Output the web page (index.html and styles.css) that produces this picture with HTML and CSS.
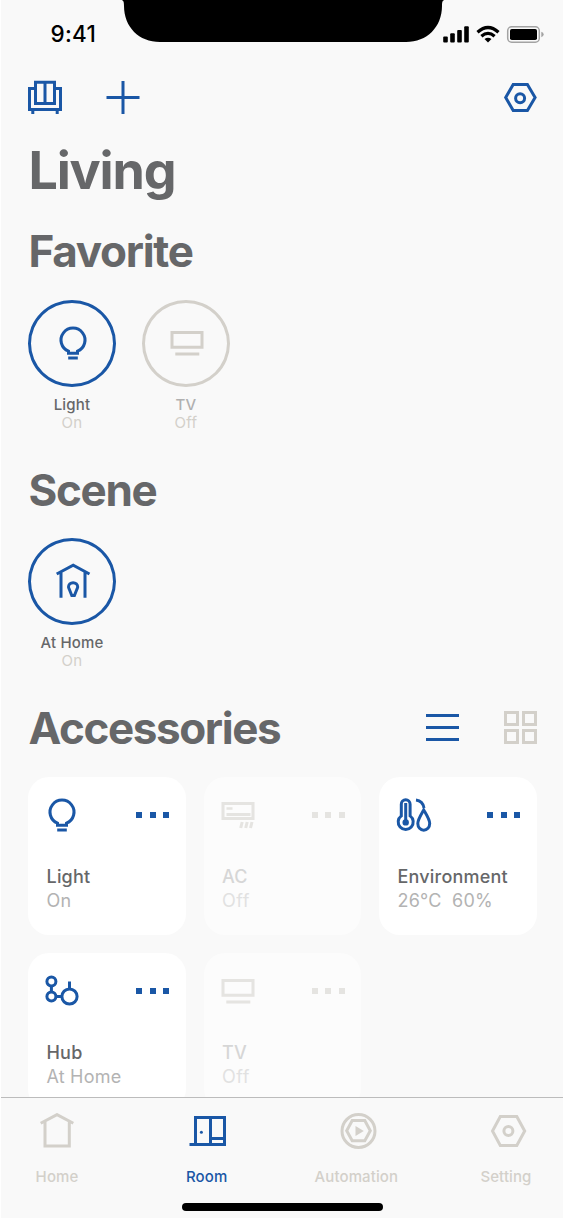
FILE: index.html
```html
<!DOCTYPE html>
<html lang="en">
<head>
<meta charset="utf-8">
<title>Living</title>
<link rel="stylesheet" href="styles.css">
</head>
<body>
<svg class="defs" aria-hidden="true">
  <symbol id="bulb" viewBox="0 0 34 34">
    <path d="M12.5 25.2A12 12 0 1 1 21.5 25.2V27.3H12.5Z"/>
    <path d="M12.2 32H21.8"/>
  </symbol>
  <symbol id="tv" viewBox="0 0 34 34">
    <path d="M2 6.5H32V21.3H2ZM5.3 28H29.3"/>
  </symbol>
</svg>
<div class="phone">
  <header class="status">
    <span class="time">9:41</span>
    <svg class="notch" viewBox="0 0 324 42"><path d="M0 0C2.5 0 3 2 3 6C3 27 18 42 39 42H285C306 42 321 27 321 6C321 2 321.500 0 324 0Z"/></svg>
    <svg class="indicators" viewBox="443 25 101 19">
      <rect x="443.200" y="36.500" width="4.600" height="6" rx="1"/>
      <rect x="450.200" y="33.300" width="4.600" height="9.200" rx="1"/>
      <rect x="457.200" y="30" width="4.600" height="12.500" rx="1"/>
      <rect x="464.200" y="26.300" width="4.600" height="16.200" rx="1"/>
      <g class="wifi">
        <path d="M477.500 32.200Q488 22.800 498.500 32.200"/>
        <path d="M481.400 36.300Q488 30.400 494.600 36.300"/>
      </g>
      <path d="M484.500 39Q488 36.300 491.500 39L488 42.500Z"/>
      <rect class="cell" x="507.700" y="26.800" width="31.600" height="15.400" rx="4"/>
      <rect x="510" y="29" width="27" height="11" rx="1.800"/>
      <path class="nub" d="M541.300 31.800Q543.700 32.600 543.700 34.500T541.300 37.200Z"/>
    </svg>
  </header>

  <main class="content">
    <nav class="toolbar">
      <svg class="icon" viewBox="28 80 34 34"><path d="M35.500 82.200H54.500V103.500H35.500ZM45 82V103M35.500 88.500H29.500V109.500H60.500V88.500H54.500M32.800 109.500V114M57.200 109.500V114"/></svg>
      <svg class="icon plus" viewBox="0 0 34 34"><path d="M.5 17.500H33.500M17 1V34"/></svg>
      <svg class="icon end" viewBox="503.300 80 34 34"><path d="M513.500 84.500H527.700L535.400 97.500L527.700 110.500H513.500L506 97.500Z"/><circle cx="520.400" cy="98.200" r="4.500"/></svg>
    </nav>

    <h1 class="title">Living</h1>

    <h2 class="heading favorite">Favorite</h2>
    <div class="rounds">
      <div class="round">
        <div class="ring"><svg class="icon"><use href="#bulb"/></svg></div>
        <div class="name">Light</div>
        <div class="state">On</div>
      </div>
      <div class="round off">
        <div class="ring"><svg class="icon"><use href="#tv"/></svg></div>
        <div class="name">TV</div>
        <div class="state">Off</div>
      </div>
    </div>

    <h2 class="heading scene">Scene</h2>
    <div class="rounds">
      <div class="round">
        <div class="ring"><svg class="icon" viewBox="55.800 564.500 34 34"><path d="M56.500 574.500L73 565.700L89.300 574.500M60.800 572.500V598.300M84.800 572.500V598.300"/><path d="M71.600 596L69 589.500Q68.300 588 68.300 587.500A4.600 4.300 0 0 1 77.500 587.500Q77.500 588 76.800 589.500L74.200 596Z"/></svg></div>
        <div class="name">At Home</div>
        <div class="state">On</div>
      </div>
    </div>

    <div class="section-bar">
      <h2 class="heading accessories">Accessories</h2>
      <svg class="view" viewBox="0 0 33 33"><path d="M0 4.500H33M0 16.500H33M0 28.500H33"/></svg>
      <svg class="view muted" viewBox="0 0 33 33"><path d="M1.500 1.500H13.500V13.500H1.500ZM19.500 1.500H31.500V13.500H19.500ZM1.500 19.500H13.500V31.500H1.500ZM19.500 19.500H31.500V31.500H19.500Z"/></svg>
    </div>

    <div class="cards">
      <article class="card">
        <div class="card-top"><svg class="icon"><use href="#bulb"/></svg><span class="dots"><i></i><i></i><i></i></span></div>
        <div class="card-name">Light</div>
        <div class="card-state">On</div>
      </article>
      <article class="card off">
        <div class="card-top"><svg class="icon" viewBox="0 0 34 34"><path d="M2 5.500H32V20.500H2ZM5.500 16.500H29.500"/><path class="thin" d="M5.500 10.500H11.500"/><path class="fan" d="M21.200 24L19.700 30M26.200 24L24.700 30M31 24L29.500 30"/></svg><span class="dots"><i></i><i></i><i></i></span></div>
        <div class="card-name">AC</div>
        <div class="card-state">Off</div>
      </article>
      <article class="card">
        <div class="card-top"><svg class="icon wide" viewBox="396 798 36 34"><path d="M401.300 815.900V804.200A4.400 4.400 0 0 1 410.100 804.200V815.900A7.500 7.500 0 1 1 401.300 815.900Z"/><path d="M405.700 803V821"/><circle class="solid" cx="405.700" cy="822.400" r="3.200"/><path d="M423.700 810C420.500 815.500 417.800 819.500 417.800 823.600A5.900 6.600 0 0 0 429.700 823.600C429.700 819.500 426.900 815.500 423.700 810ZM416 800Q422.700 800.700 424 808"/></svg><span class="dots"><i></i><i></i><i></i></span></div>
        <div class="card-name">Environment</div>
        <div class="card-state">26°C&nbsp; 60%</div>
      </article>
      <article class="card">
        <div class="card-top"><svg class="icon" viewBox="0.300 0 34 34"><circle cx="6.700" cy="7.500" r="4.500"/><circle cx="6.700" cy="22.500" r="4.500"/><circle cx="24.800" cy="22.500" r="7.600"/><path d="M6.700 12V18M11.200 22.500H17.200M24.800 7.500V15"/></svg><span class="dots"><i></i><i></i><i></i></span></div>
        <div class="card-name">Hub</div>
        <div class="card-state">At Home</div>
      </article>
      <article class="card off">
        <div class="card-top"><svg class="icon"><use href="#tv"/></svg><span class="dots"><i></i><i></i><i></i></span></div>
        <div class="card-name">TV</div>
        <div class="card-state">Off</div>
      </article>
    </div>
  </main>

  <footer class="tabbar">
    <div class="tabs">
      <a class="tab"><svg viewBox="38 1113 38 36"><path d="M40.700 1123.300L57 1114.600L73.300 1123.300M45 1122V1146H69.300V1122"/></svg><span>Home</span></a>
      <a class="tab active"><svg viewBox="188 1113 38 36"><path d="M189.500 1144.500H224.500V1117.500H195.500V1144.500M210.500 1117.500V1144.500M210.500 1138.500H224.500"/><circle class="solid" cx="201.400" cy="1132.300" r="1.500"/></svg><span>Room</span></a>
      <a class="tab shifted"><svg viewBox="339.500 1113 38 36"><circle cx="358" cy="1131" r="16.500"/><path d="M351.700 1120.500H364.300L369.800 1130.700L364.300 1140.800H351.700L346.200 1130.700Z"/><path class="solid" d="M355 1126L363.300 1131L355 1136Z"/></svg><span>Automation</span></a>
      <a class="tab shifted"><svg viewBox="489 1113 38 36"><path d="M500.300 1116.500H516.800L524.700 1131L516.800 1145.500H500.300L492.500 1131Z"/><circle cx="508.400" cy="1131" r="4.500"/></svg><span>Setting</span></a>
    </div>
    <div class="home-indicator"></div>
  </footer>
</div>
</body>
</html>
```
FILE: styles.css
```css
* { box-sizing: border-box; }
body {
  margin: 0;
  background: #fff;
  font-family: Inter, "Liberation Sans", sans-serif;
  color: #666769;
}
svg { display: block; flex: none; }
.defs { position: absolute; width: 0; height: 0; }

.phone {
  display: flex;
  flex-direction: column;
  height: 1218px;
  margin-left: 1px;
  background: #f9f9f9;
  overflow: hidden;
}

.status {
  position: relative;
  display: flex;
  flex: none;
  justify-content: space-between;
  height: 80px;
  padding: 20px 19px 0 49.500px;
  color: #000;
}
.time { font-size: 22.500px; font-weight: 550; line-height: 28px; letter-spacing: .3px; }
.notch { position: absolute; left: 119.500px; top: 0; width: 324px; height: 42px; }
.indicators { width: 101px; height: 19px; margin-top: 5px; }
.wifi { fill: none; stroke: #000; stroke-width: 3.200; }
.cell { fill: none; stroke: #a3a3a3; stroke-width: 1.500; }
.nub { fill: #a3a3a3; }

.content { flex: 1; min-height: 0; padding: 0 26px 0 27px; overflow: hidden; }

.icon, .view, .tab svg {
  fill: none;
  stroke: #1a57a6;
  stroke-width: 3;
}
.icon { width: 34px; height: 34px; overflow: visible; }
.icon.wide { width: 36px; }
.icon .solid { fill: #1a57a6; stroke: none; }
.icon .thin { stroke-width: 2.500; }

.toolbar { display: flex; height: 61px; }
.plus { margin-left: 44px; }
.end { margin-left: auto; }

.title {
  margin: 0;
  padding-left: .5px;
  font-size: 52px;
  line-height: 60px;
  font-weight: 700;
  letter-spacing: -1.200px;
}
.heading {
  margin: 0;
  padding-left: .5px;
  font-size: 44px;
  line-height: 52px;
  font-weight: 700;
  letter-spacing: -1.300px;
}
.favorite { margin-top: 24px; }
.scene { margin-top: 32px; }

.rounds { display: flex; gap: 26px; margin-top: 23px; }
.scene + .rounds { margin-top: 22.500px; }
.round { width: 88px; text-align: center; font-size: 15px; line-height: 18px; letter-spacing: .3px; }
.ring {
  display: flex;
  align-items: center;
  justify-content: center;
  height: 87px;
  margin-bottom: 8.500px;
  padding: 0 0 1px 1.500px;
  border: 3px solid #1a57a6;
  border-radius: 50%;
}
.name { font-weight: 450; letter-spacing: .2px; }
.state { color: #d3d0ca; }
.round.off .ring { border-color: #d3d0ca; }
.off .icon { stroke: #d3d0ca; }
.round.off .name { color: #b0b0b0; }

.section-bar { display: flex; align-items: center; margin-top: 32.500px; }
.accessories { margin-right: auto; letter-spacing: -1.400px; }
.view { width: 33px; height: 33px; margin-right: 45px; margin-bottom: 1px; }
.view.muted { margin-right: 0; stroke: #d3d0ca; }

.cards {
  display: grid;
  grid-template-columns: repeat(3, 157.500px);
  gap: 18px;
  margin-top: 23px;
}
.card {
  height: 157.500px;
  padding: 21px 16.500px 0 17px;
  border-radius: 21px;
  background: #fff;
}
.card.off { opacity: .5; }
.card-top { display: flex; justify-content: space-between; margin-bottom: 33px; }
.dots { display: flex; gap: 7.500px; padding-top: 14px; }
.dots i { width: 6px; height: 6px; background: #1a57a6; }
.off .dots i { background: #d3d0ca; }
.card-name, .card-state { padding-left: 1.500px; font-size: 18px; line-height: 24px; white-space: nowrap; }
.card-name { font-weight: 450; letter-spacing: .2px; }
.card-state { color: #b3b3b3; letter-spacing: .2px; }
.off .card-name { color: #b5b5b5; }
.off .card-state { color: #cbcbcb; letter-spacing: .5px; }

.tabbar { flex: none; height: 121px; border-top: 1px solid #bcbcbc; }
.tabs { display: flex; justify-content: space-between; height: 105px; padding: 15px 1px 0 0; }
.tab { width: 112px; display: flex; flex-direction: column; align-items: center; color: #d3d0ca; font-size: 15px; line-height: 18px; font-weight: 500; letter-spacing: .1px; }
.tab svg { width: 38px; height: 36px; margin-bottom: 18.500px; stroke: #d3d0ca; }
.tab .solid { fill: #d3d0ca; stroke: none; }
.tab.active { color: #1a57a6; }
.tab.active svg { stroke: #1a57a6; }
.tab.active .solid { fill: #1a57a6; }
.tab.shifted svg { margin-left: 5px; }
.home-indicator { width: 201px; height: 7.500px; margin-left: 181px; border-radius: 4px; background: #000; }
```
